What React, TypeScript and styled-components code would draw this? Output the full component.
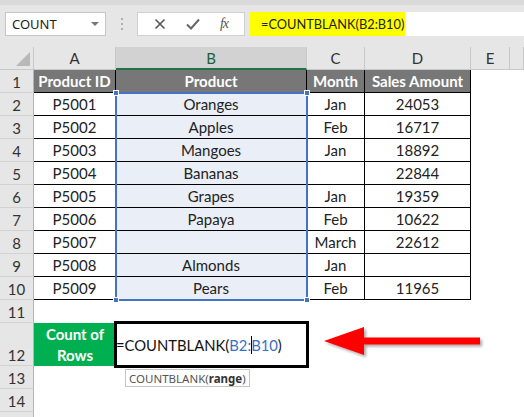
import React from "react";
import styled, { createGlobalStyle } from "styled-components";

const GlobalStyle = createGlobalStyle`
  html, body {
    margin: 0;
    padding: 0;
    background: #ffffff;
    overflow: hidden;
  }
  * {
    box-sizing: border-box;
  }
`;

const Page = styled.div`
  width: 524px;
  height: 417px;
  overflow: hidden;
  font-family: Lato, "Noto Sans", sans-serif;
  background: #ffffff;
`;

const Toolbar = styled.div`
  height: 47px;
  background: #e6e6e6;
  border-top: 5px solid #dadada;
  display: flex;
  align-items: flex-start;
  padding: 7px 0 0 5px;
`;

const NameBox = styled.div`
  width: 101px;
  height: 24px;
  background: #ffffff;
  border: 1px solid #c6c6c6;
  display: flex;
  align-items: center;
  justify-content: space-between;
  padding: 0 6px 0 6px;
  font-family: "Noto Sans", sans-serif;
  font-size: 13px;
  color: #222222;
`;

const Caret = styled.span`
  width: 0;
  height: 0;
  border-left: 4px solid transparent;
  border-right: 4px solid transparent;
  border-top: 4px solid #777777;
`;

const Grip = styled.div`
  width: 31px;
  height: 24px;
  display: flex;
  flex-direction: column;
  align-items: center;
  justify-content: center;
  gap: 3px;
  span {
    width: 2px;
    height: 2px;
    background: #b0b0b0;
  }
`;

const ActionBox = styled.div`
  width: 108px;
  height: 24px;
  background: #ffffff;
  border: 1px solid #d0d0d0;
  display: flex;
  align-items: center;
  justify-content: space-around;
  padding: 0 6px;
`;

const Fx = styled.span`
  font-family: "Liberation Serif", serif;
  font-style: italic;
  font-size: 14px;
  color: #555555;
  letter-spacing: -1px;
`;

const FormulaBar = styled.div`
  flex: 1;
  height: 24px;
  margin-left: 5px;
  background: #ffffff;
  display: flex;
  align-items: center;
`;

const Highlight = styled.span`
  background: #ffff00;
  height: 100%;
  width: 155px;
  display: flex;
  align-items: center;
  padding-left: 11px;
  font-size: 12.8px;
  color: #222222;
  white-space: nowrap;
`;

const Sheet = styled.div`
  position: relative;
  display: grid;
  grid-template-columns: 34px 82px 191px 58px 106px 39px 1fr;
  grid-template-rows: 23px repeat(11, 23px) 43px 23px 23px 23px;
  font-size: 15px;
  color: #222222;
`;

const Corner = styled.div`
  background: #e6e6e6;
  border-right: 1px solid #c8c8c8;
  border-bottom: 1px solid #c8c8c8;
  position: relative;
  &::after {
    content: "";
    position: absolute;
    right: 3px;
    bottom: 3px;
    border-left: 14px solid transparent;
    border-bottom: 14px solid #b8b8b8;
  }
`;

const ColHeader = styled.div<{ $active?: boolean }>`
  background: ${(p) => (p.$active ? "#d2d2d2" : "#e6e6e6")};
  border-right: 1px solid #c8c8c8;
  border-bottom: ${(p) => (p.$active ? "2px solid #217346" : "1px solid #c8c8c8")};
  color: ${(p) => (p.$active ? "#1e5e3a" : "#333333")};
  display: flex;
  align-items: center;
  justify-content: center;
  font-size: 15px;
`;

const RowHeader = styled.div`
  background: #e6e6e6;
  border-right: 1px solid #b4b4b4;
  border-bottom: 1px solid #d2d2d2;
  display: flex;
  align-items: flex-end;
  justify-content: center;
  padding-bottom: 1px;
  font-size: 15px;
  color: #333333;
`;

const HeadCell = styled.div`
  background: #777777;
  color: #ffffff;
  font-weight: 700;
  border-right: 1px solid #000000;
  border-bottom: 1px solid #000000;
  display: flex;
  align-items: center;
  justify-content: center;
  white-space: nowrap;
`;

const DataCell = styled.div<{ $selected?: boolean }>`
  background: ${(p) => (p.$selected ? "#e9eef7" : "#ffffff")};
  border-right: 1px solid #000000;
  border-bottom: 1px solid #000000;
  display: flex;
  align-items: center;
  justify-content: center;
`;

const Blank = styled.div``;

const GreenCell = styled.div`
  background: #00b050;
  color: #ffffff;
  font-weight: 700;
  display: flex;
  flex-direction: column;
  align-items: center;
  justify-content: center;
  line-height: 21px;
`;

const EditCell = styled.div`
  position: relative;
  z-index: 2;
  background: #ffffff;
  outline: 3px solid #000000;
  outline-offset: -1px;
  display: flex;
  align-items: center;
  font-size: 14.8px;
  color: #111111;
  white-space: nowrap;
`;

const Ref = styled.span`
  color: #3a6fc4;
`;

const Cursor = styled.span`
  display: inline-block;
  width: 1px;
  height: 18px;
  background: #000000;
  vertical-align: middle;
  margin-right: -1px;
`;

const Selection = styled.div`
  position: absolute;
  left: 115px;
  top: 45px;
  width: 193px;
  height: 209px;
  border: 2px solid #4472c4;
  pointer-events: none;
`;

const Handle = styled.span<{ $x: "l" | "r"; $y: "t" | "b" }>`
  position: absolute;
  width: 6px;
  height: 6px;
  background: #4472c4;
  border: 1px solid #ffffff;
  ${(p) => (p.$x === "l" ? "left: -4px;" : "right: -4px;")}
  ${(p) => (p.$y === "t" ? "top: -4px;" : "bottom: -4px;")}
`;

const Tip = styled.div`
  position: absolute;
  left: 125px;
  top: 322px;
  height: 18px;
  padding: 0 3px;
  background: #ffffff;
  border: 1px solid #c4c4c4;
  font-family: "Noto Sans", sans-serif;
  font-size: 11.5px;
  color: #555555;
  display: flex;
  align-items: center;
  z-index: 3;
  b {
    color: #333333;
  }
`;

const Arrow = styled.svg`
  position: absolute;
  left: 318px;
  top: 276px;
  overflow: visible;
`;

const months = ["Jan", "Feb", "Jan", "", "Jan", "Feb", "March", "Jan", "Feb"];
const products = ["Oranges", "Apples", "Mangoes", "Bananas", "Grapes", "Papaya", "", "Almonds", "Pears"];
const sales = ["24053", "16717", "18892", "22844", "19359", "10622", "22612", "", "11965"];

const App: React.FC = () => {
  return (
    <Page>
      <GlobalStyle />
      <Toolbar>
        <NameBox>
          COUNT
          <Caret />
        </NameBox>
        <Grip>
          <span />
          <span />
          <span />
        </Grip>
        <ActionBox>
          <svg width="12" height="12" viewBox="0 0 12 12">
            <path d="M1.5 1.5 L10.5 10.5 M10.5 1.5 L1.5 10.5" stroke="#555" strokeWidth="1.6" />
          </svg>
          <svg width="14" height="12" viewBox="0 0 14 12">
            <path d="M1 6.5 L5 10.5 L13 1.5" stroke="#666" strokeWidth="2" fill="none" />
          </svg>
          <Fx>fx</Fx>
        </ActionBox>
        <FormulaBar>
          <Highlight>=COUNTBLANK(B2:B10)</Highlight>
        </FormulaBar>
      </Toolbar>

      <Sheet>
        <Corner />
        <ColHeader>A</ColHeader>
        <ColHeader $active>B</ColHeader>
        <ColHeader>C</ColHeader>
        <ColHeader>D</ColHeader>
        <ColHeader>E</ColHeader>
        <ColHeader />

        <RowHeader>1</RowHeader>
        <HeadCell>Product ID</HeadCell>
        <HeadCell>Product</HeadCell>
        <HeadCell>Month</HeadCell>
        <HeadCell>Sales Amount</HeadCell>
        <Blank />
        <Blank />

        {products.map((prod, i) => (
          <React.Fragment key={i}>
            <RowHeader>{i + 2}</RowHeader>
            <DataCell>P500{i + 1}</DataCell>
            <DataCell $selected>{prod}</DataCell>
            <DataCell>{months[i]}</DataCell>
            <DataCell>{sales[i]}</DataCell>
            <Blank />
            <Blank />
          </React.Fragment>
        ))}

        <RowHeader>11</RowHeader>
        <Blank />
        <Blank />
        <Blank />
        <Blank />
        <Blank />
        <Blank />

        <RowHeader>12</RowHeader>
        <GreenCell>
          <span>Count of</span>
          <span>Rows</span>
        </GreenCell>
        <EditCell>
          =COUNTBLANK(<Ref>B2:</Ref>
          <Cursor />
          <Ref>B10</Ref>)
        </EditCell>
        <Blank />
        <Blank />
        <Blank />
        <Blank />

        {[13, 14, 0].map((n) => (
          <React.Fragment key={n}>
            <RowHeader>{n > 0 ? n : ""}</RowHeader>
            <Blank />
            <Blank />
            <Blank />
            <Blank />
            <Blank />
            <Blank />
          </React.Fragment>
        ))}

        <Selection>
          <Handle $x="l" $y="t" />
          <Handle $x="r" $y="t" />
          <Handle $x="l" $y="b" />
          <Handle $x="r" $y="b" />
        </Selection>

        <Tip>
          COUNTBLANK(<b>range</b>)
        </Tip>

        <Arrow width="170" height="40" viewBox="0 0 170 40">
          <defs>
            <filter id="shadow" x="-10%" y="-30%" width="130%" height="170%">
              <feDropShadow dx="2" dy="2" stdDeviation="1.5" floodColor="#000" floodOpacity="0.35" />
            </filter>
          </defs>
          <path
            d="M6 18 L46 4 L46 14.5 L162 14.5 L162 21.5 L46 21.5 L46 32 Z"
            fill="#ff0000"
            filter="url(#shadow)"
          />
        </Arrow>
      </Sheet>
    </Page>
  );
};

export default App;
